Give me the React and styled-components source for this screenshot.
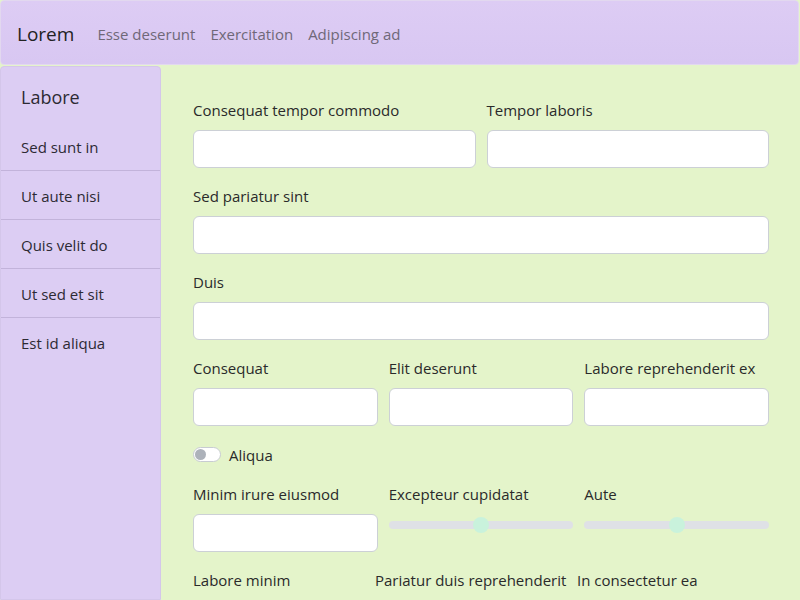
import React from "react";
import styled, { createGlobalStyle } from "styled-components";

const Global = createGlobalStyle`
  html, body { margin: 0; padding: 0; background: #e4f4ca; }
  body { font-family: "Open Sans", "Noto Sans", sans-serif; color: #212529; }
  * { box-sizing: border-box; }
`;

const Page = styled.div`
  width: 800px;
  height: 600px;
  display: flex;
  flex-direction: column;
  gap: 1px;
  overflow: hidden;
`;

const Header = styled.header`
  height: 65px;
  margin: 0 1px 0 0;
  display: flex;
  align-items: center;
  gap: 15px;
  padding: 2px 16px 0;
  background: linear-gradient(#ddccf4, #d8c7f2);
  border: 1px solid #e2d8ef;
  border-radius: 4px;
  flex-shrink: 0;
`;

const Brand = styled.div`
  font-size: 19px;
  color: #222;
  margin-right: 8px;
`;

const NavLink = styled.a`
  font-size: 15px;
  color: #6f6878;
  text-decoration: none;
`;

const Body = styled.div`
  flex: 1;
  display: flex;
  min-height: 0;
`;

const Sidebar = styled.aside`
  width: 161px;
  flex-shrink: 0;
  background: #dccdf3;
  border: 1px solid #d4c6ea;
  border-radius: 4px 4px 0 0;
  display: flex;
  flex-direction: column;
`;

const SideTitle = styled.div`
  font-size: 18px;
  line-height: 24px;
  height: 55px;
  color: #2d2a33;
  padding: 18px 20px 0;
`;

const SideItem = styled.div`
  font-size: 15px;
  line-height: 22px;
  color: #2d2a33;
  padding: 14px 20px 0;
  height: 49px;
  border-bottom: ${(p) => (p.$last ? "none" : "1px solid #c2b3da")};
`;

const Main = styled.main`
  flex: 1;
  padding: 33px 31px 0 32px;
  display: flex;
  flex-direction: column;
  gap: 17px;
`;

const Row = styled.div`
  display: grid;
  grid-template-columns: ${(p) => p.$cols || "1fr"};
  gap: 11px;
`;

const Field = styled.div`
  display: flex;
  flex-direction: column;
  gap: 9px;
  min-width: 0;
`;

const Label = styled.label`
  font-size: 15px;
  line-height: 22px;
  color: #2a2a2a;
  white-space: nowrap;
`;

const Input = styled.input`
  height: 38px;
  width: 100%;
  background: #fff;
  border: 1px solid #ccd0d6;
  border-radius: 6px;
  font: inherit;
  padding: 6px 12px;
`;

const SwitchRow = styled.div`
  display: flex;
  align-items: center;
  gap: 8px;
  height: 23px;
  font-size: 15px;
  color: #2a2a2a;
`;

const Switch = styled.span`
  width: 28px;
  height: 15px;
  border: 1px solid #c8ccd2;
  border-radius: 8px;
  background: #fff;
  display: flex;
  align-items: center;
  padding: 1px;
`;

const Knob = styled.span`
  width: 11px;
  height: 11px;
  border-radius: 50%;
  background: #adb2ba;
`;

const SliderWrap = styled.div`
  height: 21px;
  display: flex;
  align-items: center;
`;

const Track = styled.div`
  width: 100%;
  height: 8px;
  border-radius: 4px;
  background: #dfe1e6;
  position: relative;
`;

const Thumb = styled.span`
  position: absolute;
  top: 50%;
  width: 16px;
  height: 16px;
  border-radius: 50%;
  background: #c9f2dc;
  transform: translate(-50%, -50%);
`;

function Slider({ value }) {
  return (
    <SliderWrap>
      <Track>
        <Thumb style={{ left: `${value}%` }} />
      </Track>
    </SliderWrap>
  );
}

export default function App() {
  const items = ["Sed sunt in", "Ut aute nisi", "Quis velit do", "Ut sed et sit", "Est id aliqua"];
  return (
    <>
      <Global />
      <Page>
        <Header>
          <Brand>Lorem</Brand>
          <NavLink>Esse deserunt</NavLink>
          <NavLink>Exercitation</NavLink>
          <NavLink>Adipiscing ad</NavLink>
        </Header>
        <Body>
          <Sidebar>
            <SideTitle>Labore</SideTitle>
            {items.map((t, i) => (
              <SideItem key={t} $last={i === items.length - 1}>{t}</SideItem>
            ))}
          </Sidebar>
          <Main>
            <Row $cols="1fr 1fr">
              <Field><Label>Consequat tempor commodo</Label><Input /></Field>
              <Field><Label>Tempor laboris</Label><Input /></Field>
            </Row>
            <Row>
              <Field><Label>Sed pariatur sint</Label><Input /></Field>
            </Row>
            <Row>
              <Field><Label>Duis</Label><Input /></Field>
            </Row>
            <Row $cols="1fr 1fr 1fr">
              <Field><Label>Consequat</Label><Input /></Field>
              <Field><Label>Elit deserunt</Label><Input /></Field>
              <Field><Label>Labore reprehenderit ex</Label><Input /></Field>
            </Row>
            <SwitchRow>
              <Switch><Knob /></Switch>
              Aliqua
            </SwitchRow>
            <Row $cols="1fr 1fr 1fr">
              <Field><Label>Minim irure eiusmod</Label><Input /></Field>
              <Field><Label>Excepteur cupidatat</Label><Slider value={50} /></Field>
              <Field><Label>Aute</Label><Slider value={50} /></Field>
            </Row>
            <Row $cols="171px 191px 1fr">
              <Field><Label>Labore minim</Label></Field>
              <Field><Label>Pariatur duis reprehenderit</Label></Field>
              <Field><Label>In consectetur ea</Label></Field>
            </Row>
          </Main>
        </Body>
      </Page>
    </>
  );
}
